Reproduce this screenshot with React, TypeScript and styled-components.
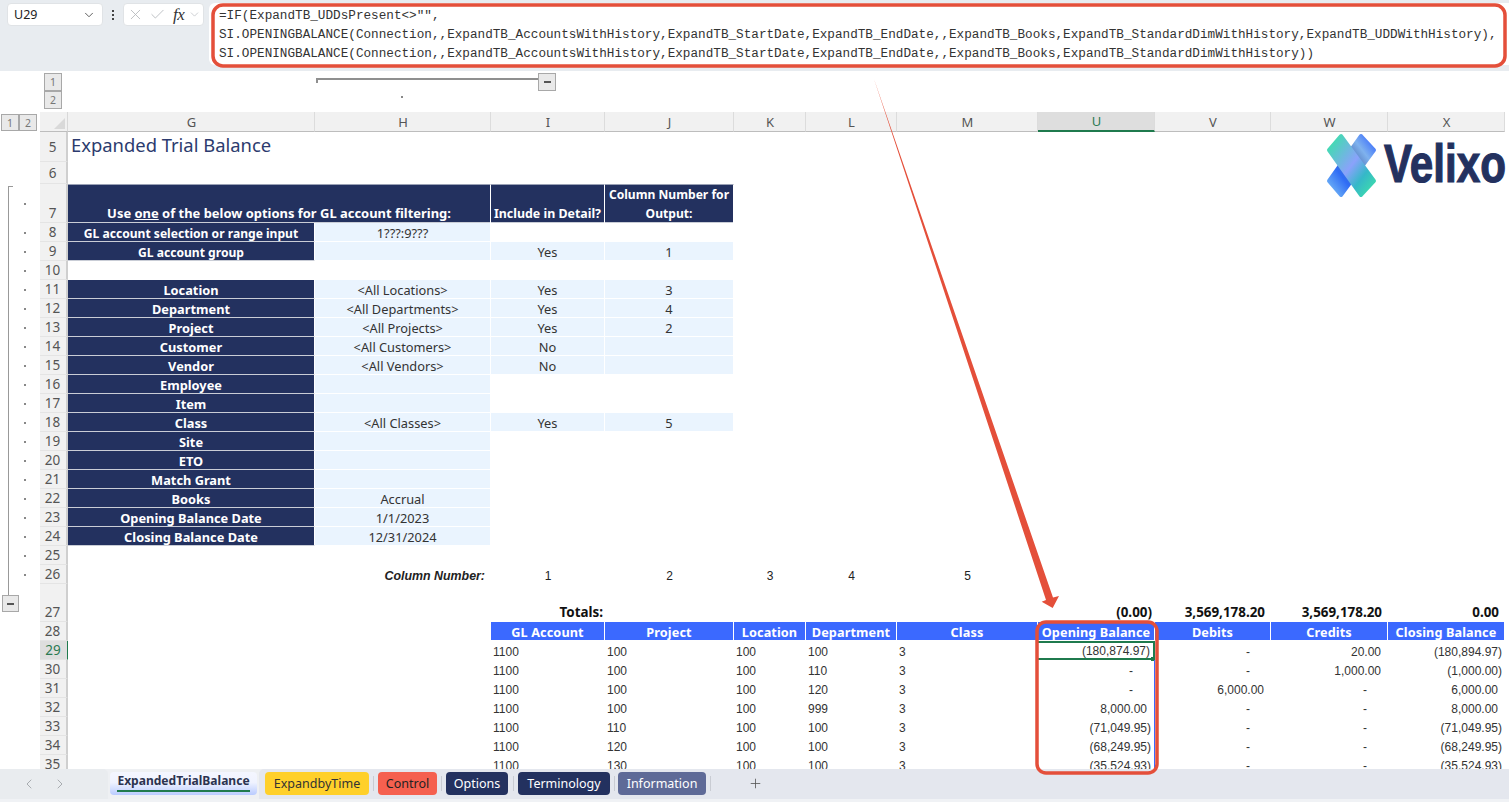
import React from "react";
import styled, { createGlobalStyle } from "styled-components";
import { ChevronDown, X, Check, Plus, ChevronLeft, ChevronRight } from "lucide-react";

const GRID = "40px 28px 247px 176px 114px 129px 72px 91px 141px 117px 116px 117px 117px 4px";
const UI = '"Noto Sans", "Open Sans", sans-serif';
const ARIAL = '"Liberation Sans", Arial, sans-serif';

const Global = createGlobalStyle`
  html, body { margin: 0; padding: 0; background: #fff; }
  body { font-family: ${UI}; overflow: hidden; }
`;

const Page = styled.div`
  position: relative; width: 1509px; height: 802px; display: flex; flex-direction: column; overflow: hidden;
`;

/* ---------- formula bar ---------- */
const FormulaBar = styled.div`
  height: 71px; flex: none; background: #e8ecf0; display: flex; align-items: flex-start;
  padding: 3px 0 0 7px; box-sizing: border-box;
`;
const NameBox = styled.div`
  width: 96px; height: 23px; background: #fff; border-radius: 4px; box-sizing: border-box; padding: 0 6px;
  display: flex; align-items: center; justify-content: space-between; border: 1px solid #e0e3e6;
  font: 12.5px ${UI}; color: #222; svg { color: #555; }
`;
const Dots = styled.div`
  width: 20px; height: 23px; display: flex; flex-direction: column; align-items: center; justify-content: center; gap: 2px;
  span { width: 2px; height: 2px; background: #444; }
`;
const FxBox = styled.div`
  width: 81px; height: 23px; background: #fff; border-radius: 4px; margin-right: 5px; display: flex; align-items: center;
  padding: 0 2px 0 3px; box-sizing: border-box; border: 1px solid #e0e3e6; gap: 5px;
  svg { color: #b4b7bb; flex: none; }
`;
const FxGlyph = styled.span`
  font: italic 400 17px "Liberation Serif", serif; color: #333; margin-left: 2px; margin-right: -6px; width: 19px; letter-spacing: -.5px;
`;
const FormulaInput = styled.div`
  flex: 1; height: 62px; background: #fff; border-radius: 6px 0 0 6px; box-sizing: border-box; padding: 3px 0 0 10px;
  font: 12.68px/19px "Liberation Mono", "DejaVu Sans Mono", monospace; color: #333; white-space: pre;
`;

/* ---------- column outline ---------- */
const OutlineStrip = styled.div`
  height: 41px; flex: none; background: #fff; display: flex; align-items: flex-start; padding: 2px 0 0 44px; box-sizing: border-box;
`;
const LevelStack = styled.div`display: flex; flex-direction: column; width: 18px;`;
const LevelButton = styled.div<{ $w?: number; $h?: number }>`
  width: ${(p) => p.$w ?? 18}px; height: ${(p) => p.$h ?? 18}px; box-sizing: border-box; background: #e9e9e9; border: 1px solid #a8a8a8;
  font: 10.5px ${UI}; color: #777; display: flex; align-items: center; justify-content: center; flex: none;
`;
const GroupColumn = styled.div`margin: 5px 0 0 254px; width: 222px; display: flex; flex-direction: column;`;
const GroupLine = styled.div`height: 5px; border-top: 2px solid #8f8f8f; border-left: 2px solid #8f8f8f; box-sizing: border-box;`;
const GroupDot = styled.span`width: 2px; height: 2px; background: #888; margin: 13px 0 0 85px;`;
const MinusButton = styled(LevelButton)`
  &::before { content: ""; width: 7px; height: 2px; background: #555; }
`;

/* ---------- sheet ---------- */
const Sheet = styled.div`flex: 1; min-height: 0; overflow: hidden; position: relative; background: #fff;`;
const Row = styled.div<{ $h: number }>`
  display: grid; grid-template-columns: ${GRID}; grid-template-rows: ${(p) => p.$h}px; height: ${(p) => p.$h}px;
`;
const Gutter = styled.div<{ $bracket?: boolean; $top?: boolean }>`
  position: relative; display: flex; align-items: center; box-sizing: border-box;
  ${(p) => p.$bracket ? "background: linear-gradient(#999,#999) 8px 0/1px 100% no-repeat;" : ""}
  ${(p) => p.$top ? "background: linear-gradient(#999,#999) 8px 2px/1px 100% no-repeat, linear-gradient(#999,#999) 8px 2px/5px 1px no-repeat;" : ""}
`;
const GutterDot = styled.span`width: 2px; height: 2px; background: #888; margin-left: 24px;`;
const GutterStack = styled.div`display: flex; flex-direction: column; align-self: stretch;`;
const BracketStub = styled.div`width: 9px; height: 11px; border-right: 1px solid #999; box-sizing: border-box;`;
const GutterMinus = styled(MinusButton)`margin-left: 2px;`;
const LevelRow = styled.div`display: flex; margin: 1px 0 0 1px;`;

const RowHead = styled.div<{ $sel?: boolean; $end?: boolean }>`
  background: ${(p) => (p.$sel ? "#dedede" : "#f1f1f1")}; color: ${(p) => (p.$sel ? "#2b7a52" : "#555")};
  border-right: ${(p) => (p.$sel ? "1.5px solid #1f7a4d" : "2px solid #cfcfcf")}; border-bottom: 1px solid #e4e4e4; box-sizing: border-box;
  font: 13.5px ${UI}; display: flex; justify-content: center; padding-right: 1px; min-height: 0;
  align-items: ${(p) => (p.$end ? "flex-end" : "center")};
`;
const Corner = styled.div`
  background: #f1f1f1; border-bottom: 1px solid #bdbdbd; border-right: 1px solid #d8d8d8; box-sizing: border-box; position: relative;
  &::after { content: ""; position: absolute; right: 2px; bottom: 2px; border-style: solid; border-width: 0 0 11px 11px; border-color: transparent transparent #d9d9d9 transparent; }
`;
const ColHead = styled.div<{ $sel?: boolean }>`
  background: ${(p) => (p.$sel ? "#dedede" : "#f1f1f1")}; color: ${(p) => (p.$sel ? "#2b7a52" : "#555")};
  border-right: 1px solid #dcdcdc; box-sizing: border-box; padding-left: 1px; min-height: 0;
  border-bottom: ${(p) => (p.$sel ? "2px solid #1f7a4d" : "1px solid #bdbdbd")};
  font: 13px ${UI}; display: flex; align-items: center; justify-content: center;
`;

type Tone = "navy" | "light" | "blue" | "none";
const TONES: Record<Tone, string> = { navy: "#23315f", light: "#eaf4fe", blue: "#3b69ff", none: "transparent" };
const Cell = styled.div<{ $tone?: Tone; $span?: number; $end?: boolean }>`
  box-sizing: border-box; min-width: 0; min-height: 0; white-space: nowrap; display: flex; justify-content: center; padding-top: 2px;
  align-items: ${(p) => (p.$end ? "flex-end" : "center")};
  background: ${(p) => TONES[p.$tone ?? "none"]};
  ${(p) => (p.$span ? `grid-column: span ${p.$span};` : "")}
  ${(p) => (p.$tone === "navy" ? "border-bottom: 1px solid #c9cdd6; color: #fff;" : "")}
  ${(p) => (p.$tone === "light" ? "border-bottom: 1px solid #fff; border-right: 1px solid #fff; color: #333;" : "")}
  font: 12.8px ${UI}; color: ${(p) => (p.$tone === "navy" ? "#fff" : "#333")};
`;
const NavyLabel = styled(Cell).attrs({ $tone: "navy" as Tone })<{ $small?: boolean }>`
  font-weight: 700; font-size: ${(p) => (p.$small ? 12.1 : 12.8)}px; border-right: 1px solid #fff;
`;
const TopNavy = styled(NavyLabel)<{ $fs?: number }>`
  border-top: 1px solid #9aa1b5; border-bottom: none; box-shadow: inset 0 -1px #c9cdd6; padding: 0; text-align: center; line-height: 19px;
  font-size: ${(p) => p.$fs ?? 12.95}px;
`;
const Title = styled(Cell)`
  justify-content: flex-start; padding: 0 0 5px 3px; font-size: 18.4px; color: #2c3b6e;
`;
const ColNumberLabel = styled(Cell)`
  justify-content: flex-end; padding: 3px 6px 0 0; font: italic 700 12.4px ${ARIAL}; color: #222;
`;
const ColNumber = styled(Cell)`padding-top: 3px; font: 12px ${ARIAL}; color: #222;`;
const TotalLabel = styled(Cell)`justify-content: flex-end; padding: 0 2px 1px 0; font-weight: 700; font-size: 13.4px; color: #111;`;
const TotalValue = styled(Cell)<{ $pad: number }>`
  justify-content: flex-end; padding: 0 ${(p) => p.$pad}px 1px 0; font-weight: 700; font-size: 13.4px; color: #111;
`;
const BlueHead = styled(Cell).attrs({ $tone: "blue" as Tone })`
  color: #fff; font-weight: 700; font-size: 12.7px; border-right: 1px solid #fff; border-bottom: 1px solid #fff; letter-spacing: .1px;
`;
const Text = styled(Cell)`justify-content: flex-start; padding: 3px 0 0 2px; font: 12px ${ARIAL}; color: #333;`;
const Num = styled(Cell)<{ $pad: number; $active?: boolean; $rule?: boolean }>`
  justify-content: flex-end; padding: 3px ${(p) => p.$pad}px 0 0; font: 12px ${ARIAL}; color: #333; position: relative;
  ${(p) => (p.$rule ? "border-right: 1px solid #3b69ff;" : "")}
  ${(p) => (p.$active ? "border: 2px solid #1f7a4d; border-left: none; padding-top: 1px;" : "")}
  ${(p) => (p.$active ? `&::after { content: ""; position: absolute; right: -2px; bottom: -3px; width: 4px; height: 4px; background: #1f7a4d; }` : "")}
`;
const LogoWrap = styled.svg`position: absolute; left: 1326px; top: 19px;`;

/* ---------- tabs ---------- */
const TabBar = styled.div`height: 30px; flex: none; display: flex; background: #eef0f3;`;
const Nav = styled.div`
  width: 108px; background: #e9ecef; border-radius: 0 5px 0 0; display: flex; align-items: center; gap: 15px; padding-left: 21px; box-sizing: border-box;
  svg { color: #a3a7ab; }
`;
const ActiveTab = styled.div`
  width: 147px; height: 23px; margin: 3px 0 0 2px; border-radius: 4px; box-sizing: border-box; padding: 0 7px;
  background: linear-gradient(#f4f6ff, #f0f3ff 45%, #b9cbff); font: 700 12.05px ${UI}; color: #2c3350; position: relative; text-align: center; line-height: 18px;
  &::after { content: ""; position: absolute; left: 7px; right: 7px; bottom: 3px; height: 2px; background: #1f7a4d; }
`;
const TabStrip = styled.div`
  flex: 1; margin-left: 2px; background: #e4e7ee; border-radius: 5px 0 0 0; display: flex; align-items: flex-start; padding: 3px 0 0 6px; box-sizing: border-box;
`;
const Tab = styled.div<{ $bg: string; $fg: string; $w: number }>`
  width: ${(p) => p.$w}px; height: 23px; flex: none; border-radius: 4px; background: ${(p) => p.$bg}; color: ${(p) => p.$fg};
  font: 12.5px ${UI}; display: flex; align-items: center; justify-content: center;
`;
const TabDivider = styled.span<{ $m?: number }>`width: 1px; height: 15px; background: #c9ccd3; margin: 4px ${(p) => p.$m ?? 4}px 0;`;
const AddTab = styled.div`margin: 1px 0 0 33px; color: #555; display: flex; height: 20px; align-items: center;`;
const Footer = styled.div`height: 3px; flex: none; background: #f0f2f5;`;
const Overlay = styled.svg`position: absolute; left: 0; top: 0; pointer-events: none;`;

const COLS = ["G", "H", "I", "J", "K", "L", "M", "U", "V", "W", "X"];

type Form = { n: number; label?: string; h?: string; i?: string; j?: string; iTone?: Tone; small?: boolean };
const FORM: Form[] = [
  { n: 8, label: "GL account selection or range input", h: "1???:9???", iTone: "none", small: true },
  { n: 9, label: "GL account group", h: "", i: "Yes", j: "1", iTone: "light", small: true },
  { n: 10 },
  { n: 11, label: "Location", h: "<All Locations>", i: "Yes", j: "3", iTone: "light" },
  { n: 12, label: "Department", h: "<All Departments>", i: "Yes", j: "4", iTone: "light" },
  { n: 13, label: "Project", h: "<All Projects>", i: "Yes", j: "2", iTone: "light" },
  { n: 14, label: "Customer", h: "<All Customers>", i: "No", j: "", iTone: "light" },
  { n: 15, label: "Vendor", h: "<All Vendors>", i: "No", j: "", iTone: "light" },
  { n: 16, label: "Employee", h: "" },
  { n: 17, label: "Item", h: "" },
  { n: 18, label: "Class", h: "<All Classes>", i: "Yes", j: "5", iTone: "light" },
  { n: 19, label: "Site", h: "" },
  { n: 20, label: "ETO", h: "" },
  { n: 21, label: "Match Grant", h: "" },
  { n: 22, label: "Books", h: "Accrual" },
  { n: 23, label: "Opening Balance Date", h: "1/1/2023" },
  { n: 24, label: "Closing Balance Date", h: "12/31/2024" },
];

const DATA: [number, string, string, string, string, string, string, string, string, string][] = [
  [29, "1100", "100", "100", "100", "3", "(180,874.97)", "-", "20.00", "(180,894.97)"],
  [30, "1100", "100", "100", "110", "3", "-", "-", "1,000.00", "(1,000.00)"],
  [31, "1100", "100", "100", "120", "3", "-", "6,000.00", "-", "6,000.00"],
  [32, "1100", "100", "100", "999", "3", "8,000.00", "-", "-", "8,000.00"],
  [33, "1100", "110", "100", "100", "3", "(71,049.95)", "-", "-", "(71,049.95)"],
  [34, "1100", "120", "100", "100", "3", "(68,249.95)", "-", "-", "(68,249.95)"],
  [35, "1100", "130", "100", "100", "3", "(35,524.93)", "-", "-", "(35,524.93)"],
];
const pad = (v: string) => (v === "-" ? 21 : v.startsWith("(") ? 3 : 7);

const Logo = () => (
  <LogoWrap width="180" height="68" viewBox="0 0 180 68">
    <defs>
      <linearGradient id="ra" x1="0" y1="0" x2="1" y2="1">
        <stop offset="0" stopColor="#35e6a4" />
        <stop offset=".5" stopColor="#8aa2fb" />
        <stop offset=".72" stopColor="#35b8c8" />
        <stop offset="1" stopColor="#3fe3a6" />
      </linearGradient>
      <linearGradient id="rb" x1="1" y1="0" x2="0" y2="1">
        <stop offset="0" stopColor="#2f62ff" />
        <stop offset=".25" stopColor="#7fb2ee" />
        <stop offset=".45" stopColor="#4f74b8" />
        <stop offset=".7" stopColor="#2f6cf5" />
        <stop offset="1" stopColor="#7cc1f6" />
      </linearGradient>
    </defs>
    <g transform="translate(2 3)" strokeLinejoin="round" strokeWidth="4">
      <polygon points="33,2 46,16 13,61 1,47" fill="url(#rb)" stroke="url(#rb)" />
      <polygon points="13,2 1,16 33,61 46,47" fill="url(#ra)" stroke="url(#ra)" />
    </g>
    <text x="58" y="51" textLength="122" lengthAdjust="spacingAndGlyphs" fontFamily={ARIAL} fontWeight="700" fontSize="53" fill="#23315f" stroke="#23315f" strokeWidth="1.2">Velixo</text>
  </LogoWrap>
);

export default function App() {
  return (
    <Page>
      <Global />
      <FormulaBar>
        <NameBox>U29<ChevronDown size={14} strokeWidth={1.6} /></NameBox>
        <Dots><span /><span /><span /></Dots>
        <FxBox>
          <X size={17} strokeWidth={1.2} />
          <Check size={17} strokeWidth={1.2} />
          <FxGlyph>fx</FxGlyph>
          <ChevronDown size={13} strokeWidth={1.2} />
        </FxBox>
        <FormulaInput>{`=IF(ExpandTB_UDDsPresent<>"",
SI.OPENINGBALANCE(Connection,,ExpandTB_AccountsWithHistory,ExpandTB_StartDate,ExpandTB_EndDate,,ExpandTB_Books,ExpandTB_StandardDimWithHistory,ExpandTB_UDDWithHistory),
SI.OPENINGBALANCE(Connection,,ExpandTB_AccountsWithHistory,ExpandTB_StartDate,ExpandTB_EndDate,,ExpandTB_Books,ExpandTB_StandardDimWithHistory))`}</FormulaInput>
      </FormulaBar>

      <OutlineStrip>
        <LevelStack>
          <LevelButton>1</LevelButton>
          <LevelButton>2</LevelButton>
        </LevelStack>
        <GroupColumn>
          <GroupLine />
          <GroupDot />
        </GroupColumn>
        <MinusButton />
      </OutlineStrip>

      <Sheet>
        <Row $h={20}>
          <Gutter>
            <LevelRow>
              <LevelButton $h={17}>1</LevelButton>
              <LevelButton $h={17}>2</LevelButton>
            </LevelRow>
          </Gutter>
          <Corner />
          {COLS.map((c) => <ColHead key={c} $sel={c === "U"}>{c}</ColHead>)}
        </Row>

        <Row $h={30}>
          <Gutter /><RowHead>5</RowHead>
          <Title $span={3}>Expanded Trial Balance</Title>
        </Row>
        <Row $h={22}>
          <Gutter /><RowHead>6</RowHead>
        </Row>
        <Row $h={39}>
          <Gutter $top><GutterDot /></Gutter>
          <RowHead $end>7</RowHead>
          <TopNavy $span={2} $end><span>Use <u>one</u> of the below options for GL account filtering:</span></TopNavy>
          <TopNavy $end $fs={12.4}>Include in Detail?</TopNavy>
          <TopNavy $end $fs={12.1}><span>Column Number for<br />Output:</span></TopNavy>
        </Row>

        {FORM.map((r) => (
          <Row $h={19} key={r.n}>
            <Gutter $bracket><GutterDot /></Gutter>
            <RowHead>{r.n}</RowHead>
            {r.label ? <NavyLabel $small={r.small}>{r.label}</NavyLabel> : <Cell />}
            {r.h !== undefined ? <Cell $tone="light">{r.h}</Cell> : <Cell />}
            <Cell $tone={r.iTone ?? "none"}>{r.i}</Cell>
            <Cell $tone={r.iTone ?? "none"}>{r.j}</Cell>
          </Row>
        ))}

        <Row $h={19}>
          <Gutter $bracket><GutterDot /></Gutter>
          <RowHead>25</RowHead>
        </Row>
        <Row $h={19}>
          <Gutter $bracket><GutterDot /></Gutter>
          <RowHead>26</RowHead>
          <ColNumberLabel $span={2}>Column Number:</ColNumberLabel>
          {["1", "2", "3", "4", "5"].map((n) => <ColNumber key={n}>{n}</ColNumber>)}
        </Row>
        <Row $h={38}>
          <Gutter>
            <GutterStack>
              <BracketStub />
              <GutterMinus $w={17} $h={17} />
            </GutterStack>
          </Gutter>
          <RowHead $end>27</RowHead>
          <Cell /><Cell />
          <TotalLabel $end>Totals:</TotalLabel>
          <Cell /><Cell /><Cell /><Cell />
          <TotalValue $end $pad={3}>(0.00)</TotalValue>
          <TotalValue $end $pad={6}>3,569,178.20</TotalValue>
          <TotalValue $end $pad={6}>3,569,178.20</TotalValue>
          <TotalValue $end $pad={6}>0.00</TotalValue>
        </Row>
        <Row $h={19}>
          <Gutter /><RowHead>28</RowHead>
          <Cell /><Cell />
          {["GL Account", "Project", "Location", "Department", "Class", "Opening Balance", "Debits", "Credits", "Closing Balance"].map((t) => (
            <BlueHead key={t}>{t}</BlueHead>
          ))}
        </Row>
        {DATA.map((r) => (
          <Row $h={19} key={r[0]}>
            <Gutter />
            <RowHead $sel={r[0] === 29}>{r[0]}</RowHead>
            <Cell /><Cell />
            <Text>{r[1]}</Text>
            <Text>{r[2]}</Text>
            <Text>{r[3]}</Text>
            <Text>{r[4]}</Text>
            <Text>{r[5]}</Text>
            <Num $pad={pad(r[6])} $rule $active={r[0] === 29}>{r[6]}</Num>
            <Num $pad={pad(r[7])}>{r[7]}</Num>
            <Num $pad={pad(r[8])}>{r[8]}</Num>
            <Num $pad={pad(r[9])}>{r[9]}</Num>
          </Row>
        ))}
        <Logo />
      </Sheet>

      <TabBar>
        <Nav>
          <ChevronLeft size={16} strokeWidth={1.4} />
          <ChevronRight size={16} strokeWidth={1.4} />
        </Nav>
        <ActiveTab>ExpandedTrialBalance</ActiveTab>
        <TabStrip>
          <Tab $bg="#ffd02a" $fg="#333" $w={104}>ExpandbyTime</Tab>
          <TabDivider />
          <Tab $bg="#f5604f" $fg="#222" $w={59}>Control</Tab>
          <TabDivider />
          <Tab $bg="#23315f" $fg="#fff" $w={62}>Options</Tab>
          <TabDivider $m={4.5} />
          <Tab $bg="#23315f" $fg="#fff" $w={92}>Terminology</Tab>
          <TabDivider $m={3.5} />
          <Tab $bg="#5e6a97" $fg="#fff" $w={88}>Information</Tab>
          <TabDivider />
          <AddTab><Plus size={15} strokeWidth={1.3} /></AddTab>
        </TabStrip>
      </TabBar>
      <Footer />

      <Overlay width="1509" height="802" viewBox="0 0 1509 802">
        <rect x="213" y="5" width="1292" height="61" rx="10" fill="none" stroke="#e44f3a" strokeWidth="3.5" />
        <rect x="1037" y="622" width="120" height="151" rx="9" fill="none" stroke="#e44f3a" strokeWidth="3.5" />
        <polygon points="874,79 1053,597.5 1059,596 1052.7,608 1041.7,601.7 1046,600" fill="#e44f3a" />
      </Overlay>
    </Page>
  );
}
